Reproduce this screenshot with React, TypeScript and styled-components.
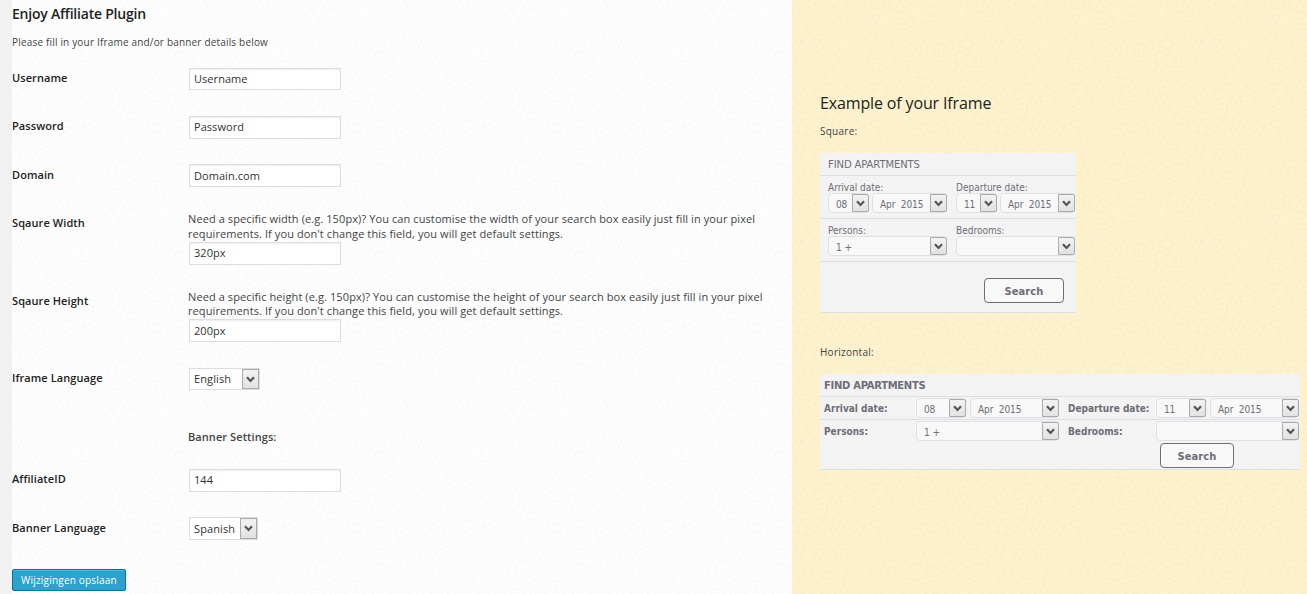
import React from "react";
import styled, { createGlobalStyle } from "styled-components";

const noise = (r: number, g: number, b: number, strength: number) =>
  `url("data:image/svg+xml,${encodeURIComponent(
    `<svg xmlns='http://www.w3.org/2000/svg' width='200' height='200'><filter id='n' x='0' y='0' width='100%' height='100%' color-interpolation-filters='sRGB'><feTurbulence type='fractalNoise' baseFrequency='0.35' numOctaves='3' stitchTiles='stitch'/><feColorMatrix values='0 0 0 0 ${r} 0 0 0 0 ${g} 0 0 0 0 ${b} ${strength} 0 0 0 ${-strength * 0.35}'/></filter><rect width='200' height='200' filter='url(#n)'/></svg>`
  )}")`;

const GlobalStyle = createGlobalStyle`
  * { box-sizing: border-box; }
  body { margin: 0; background: #f1f1f1; overflow: hidden; }
`;

const Page = styled.div`
  display: grid;
  grid-template-columns: 780px 1fr;
  height: 594px;
  padding-left: 12px;
  overflow: hidden;
  font-family: "Open Sans", sans-serif;
  font-size: 11px;
  color: #444;
`;

const SettingsPane = styled.main`
  background: #fefefe ${noise(0.94, 0.94, 0.94, 0.7)};
`;

const Title = styled.h1`
  margin: 0;
  padding-top: 3px;
  height: 35px;
  font-size: 14px;
  line-height: 22px;
  font-weight: 600;
  letter-spacing: -0.22px;
  color: #222;
`;

const Intro = styled.p`
  margin: 0;
  height: 33px;
  font-size: 10px;
  line-height: 15px;
  letter-spacing: 0.18px;
`;

const Row = styled.div<{ $h: number }>`
  display: grid;
  grid-template-columns: 176px 590px;
  height: ${(p) => p.$h}px;
`;

const Label = styled.label<{ $line?: number }>`
  font-weight: 600;
  line-height: ${(p) => p.$line ?? 20}px;
  letter-spacing: 0.08px;
  color: #222;
`;

const Field = styled.div`
  display: flex;
  flex-direction: column;
  align-items: flex-start;
`;

const Help = styled.p<{ $line?: number }>`
  margin: 0 0 1px;
  line-height: ${(p) => p.$line ?? 14.5}px;
  letter-spacing: 0.095px;
  white-space: pre-line;
`;

const SectionLabel = styled.strong`
  padding-top: 10px;
  line-height: 20px;
  font-weight: 600;
  letter-spacing: 0.08px;
`;

const TextInput = styled.input<{ $h?: number; $drop?: number }>`
  width: 152px;
  height: ${(p) => p.$h ?? 23}px;
  margin: 0 0 0 1px;
  padding: ${(p) => p.$drop ?? 0}px 4px 2px;
  border: 1px solid #ddd;
  background: #fff;
  box-shadow: inset 0 1px 2px rgba(0, 0, 0, 0.07);
  font: 11px "Open Sans", sans-serif;
  letter-spacing: 0.05px;
  color: #333;
  outline: none;
`;

const SelectBox = styled.div<{ $w: number; $h: number }>`
  display: flex;
  justify-content: space-between;
  width: ${(p) => p.$w}px;
  height: ${(p) => p.$h}px;
  margin-left: 1px;
  padding-left: 4px;
  border: 1px solid #ddd;
  background: #fff;
  line-height: ${(p) => p.$h - 2}px;
  letter-spacing: 0.1px;
  color: #333;
`;

const ArrowBox = styled.span`
  display: flex;
  align-items: center;
  justify-content: center;
  flex: none;
  width: 17px;
  border: 1px solid #aaa;
  background: linear-gradient(#f2f2f2, #e2e2e2);
`;

const SaveButton = styled.button`
  display: block;
  width: 114px;
  height: 22px;
  padding: 0;
  border: 1px solid #0074a2;
  border-radius: 2px;
  background: #2ea2cc;
  box-shadow: inset 0 1px 0 rgba(120, 200, 230, 0.5);
  font: 10px/20px "Open Sans", sans-serif;
  letter-spacing: 0.2px;
  color: #fff;
`;

const PreviewPane = styled.aside`
  padding: 91px 0 0 28px;
  background: #fef3d1 ${noise(0.96, 0.89, 0.71, 0.9)};
`;

const PreviewTitle = styled.h2`
  margin: 0;
  height: 33px;
  font-size: 16px;
  line-height: 24px;
  font-weight: 400;
  letter-spacing: -0.14px;
  color: #222;
`;

const Caption = styled.p<{ $top?: number; $h: number }>`
  margin: 0;
  padding-top: ${(p) => p.$top ?? 0}px;
  height: ${(p) => p.$h}px;
  font-size: 10px;
  line-height: 15px;
  letter-spacing: 0.25px;
`;

const Widget = styled.section<{ $w: number }>`
  width: ${(p) => p.$w}px;
  border-bottom: 1px solid #dedfe1;
  background: #f3f3f3;
  font-family: "DejaVu Sans Condensed", "DejaVu Sans", sans-serif;
  font-size: 10px;
  color: #6d6e76;
`;

const WidgetHead = styled.header<{ $bold?: boolean }>`
  height: 23px;
  padding-left: ${(p) => (p.$bold ? 4 : 8)}px;
  border-bottom: 1px solid #dedfe1;
  font-family: "DejaVu Sans", sans-serif;
  line-height: 24px;
  font-weight: ${(p) => (p.$bold ? 700 : 400)};
  letter-spacing: ${(p) => (p.$bold ? -0.3 : -0.1)}px;
`;

const SquareRow = styled.div`
  display: grid;
  grid-template-columns: 119px 119px;
  column-gap: 9px;
  height: 43px;
  padding: 5px 0 0 8px;
  border-bottom: 1px solid #dedfe1;
`;

const SmallLabel = styled.div`
  height: 12px;
  line-height: 13px;
`;

const Pickers = styled.div<{ $gap: number }>`
  display: flex;
  gap: ${(p) => p.$gap}px;
`;

const Picker = styled.div<{ $w: number }>`
  display: flex;
  justify-content: space-between;
  width: ${(p) => p.$w}px;
  height: 20px;
  padding-left: 7px;
  border: 1px solid #dfe0e2;
  border-radius: 4px;
  background: #f8f8f8;
  line-height: 22px;
  letter-spacing: -0.1px;
  white-space: pre;

  ${ArrowBox} {
    margin-right: -1px;
    border-radius: 0 2px 2px 0;
  }
`;

const SquareFoot = styled.div`
  display: flex;
  justify-content: flex-end;
  height: 50px;
  padding: 16px 12px 0 0;
`;

const WideRow = styled.div<{ $last?: boolean }>`
  display: grid;
  grid-template-columns: 92px 143px 9px 88px 143px;
  height: 23px;
  padding: 1px 0 0 4px;
  border-bottom: ${(p) => (p.$last ? "0" : "1px solid #dedfe1")};
`;

const WideLabel = styled.div<{ $second?: boolean }>`
  grid-column: ${(p) => (p.$second ? 4 : 1)};
  line-height: 22px;
  font-weight: 700;
`;

const WideFoot = styled.div`
  height: 26px;
  padding-left: 340px;
`;

const SearchButton = styled.button<{ $w: number }>`
  width: ${(p) => p.$w}px;
  height: 25px;
  padding: 2px 0 0;
  border: 1px solid #6d6e76;
  border-radius: 4px;
  background: #f8f8f8;
  font: 700 11px/21px "DejaVu Sans Condensed", "DejaVu Sans", sans-serif;
  letter-spacing: 0.1px;
  color: #6d6e76;
`;

const Arrow = () => (
  <ArrowBox>
    <svg width="9" height="7" viewBox="0 0 9 7">
      <path d="M1 1.2 4.5 4.9 8 1.2" fill="none" stroke="#555" strokeWidth="2.2" />
    </svg>
  </ArrowBox>
);

const Select = ({ value, w, h }: { value: string; w: number; h: number }) => (
  <SelectBox $w={w} $h={h}>
    {value}
    <Arrow />
  </SelectBox>
);

const Pick = ({ value, w }: { value: string; w: number }) => (
  <Picker $w={w}>
    <span>{value}</span>
    <Arrow />
  </Picker>
);

const help = (side: string) =>
  `Need a specific ${side} (e.g. 150px)? You can customise the ${side} of your search box easily just fill in your pixel\nrequirements. If you don't change this field, you will get default settings.`;

const rows = [
  { label: "Username", value: "Username", h: 48, input: 22 },
  { label: "Password", value: "Password", h: 48 },
  { label: "Domain", value: "Domain.com", h: 48, line: 22, drop: 2 },
  { label: "Sqaure Width", value: "320px", h: 78, line: 22, help: help("width") },
  { label: "Sqaure Height", value: "200px", h: 78, line: 22, drop: 2, help: help("height"), helpLine: 14 },
];

export default function App() {
  return (
    <Page>
      <GlobalStyle />
      <SettingsPane>
        <Title>Enjoy Affiliate Plugin</Title>
        <Intro>Please fill in your Iframe and/or banner details below</Intro>
        {rows.map((r) => (
          <Row key={r.label} $h={r.h}>
            <Label $line={r.line}>{r.label}</Label>
            <Field>
              {r.help && <Help $line={r.helpLine}>{r.help}</Help>}
              <TextInput $h={r.input} $drop={r.drop} defaultValue={r.value} />
            </Field>
          </Row>
        ))}
        <Row $h={49}>
          <Label>Iframe Language</Label>
          <Select value="English" w={71} h={22} />
        </Row>
        <Row $h={52}>
          <span />
          <SectionLabel>Banner Settings:</SectionLabel>
        </Row>
        <Row $h={48}>
          <Label>AffiliateID</Label>
          <TextInput defaultValue="144" />
        </Row>
        <Row $h={52}>
          <Label $line={22}>Banner Language</Label>
          <Select value="Spanish" w={69} h={23} />
        </Row>
        <SaveButton>Wijzigingen opslaan</SaveButton>
      </SettingsPane>
      <PreviewPane>
        <PreviewTitle>Example of your Iframe</PreviewTitle>
        <Caption $h={29}>Square:</Caption>
        <Widget $w={256}>
          <WidgetHead>FIND APARTMENTS</WidgetHead>
          <SquareRow>
            {[["Arrival date:", "08"], ["Departure date:", "11"]].map(([label, day]) => (
              <div key={label}>
                <SmallLabel>{label}</SmallLabel>
                <Pickers $gap={3}>
                  <Pick value={day} w={41} />
                  <Pick value="Apr  2015" w={75} />
                </Pickers>
              </div>
            ))}
          </SquareRow>
          <SquareRow>
            {[["Persons:", "1 +"], ["Bedrooms:", ""]].map(([label, value]) => (
              <div key={label}>
                <SmallLabel>{label}</SmallLabel>
                <Pick value={value} w={119} />
              </div>
            ))}
          </SquareRow>
          <SquareFoot>
            <SearchButton $w={80}>Search</SearchButton>
          </SquareFoot>
        </Widget>
        <Caption $top={32} $h={61}>Horizontal:</Caption>
        <Widget $w={480}>
          <WidgetHead $bold>FIND APARTMENTS</WidgetHead>
          <WideRow>
            <WideLabel>Arrival date:</WideLabel>
            <Pickers $gap={4}>
              <Pick value="08" w={50} />
              <Pick value="Apr  2015" w={89} />
            </Pickers>
            <WideLabel $second>Departure date:</WideLabel>
            <Pickers $gap={4}>
              <Pick value="11" w={50} />
              <Pick value="Apr  2015" w={89} />
            </Pickers>
          </WideRow>
          <WideRow $last>
            <WideLabel>Persons:</WideLabel>
            <Pick value="1 +" w={143} />
            <WideLabel $second>Bedrooms:</WideLabel>
            <Pick value="" w={143} />
          </WideRow>
          <WideFoot>
            <SearchButton $w={74}>Search</SearchButton>
          </WideFoot>
        </Widget>
      </PreviewPane>
    </Page>
  );
}
